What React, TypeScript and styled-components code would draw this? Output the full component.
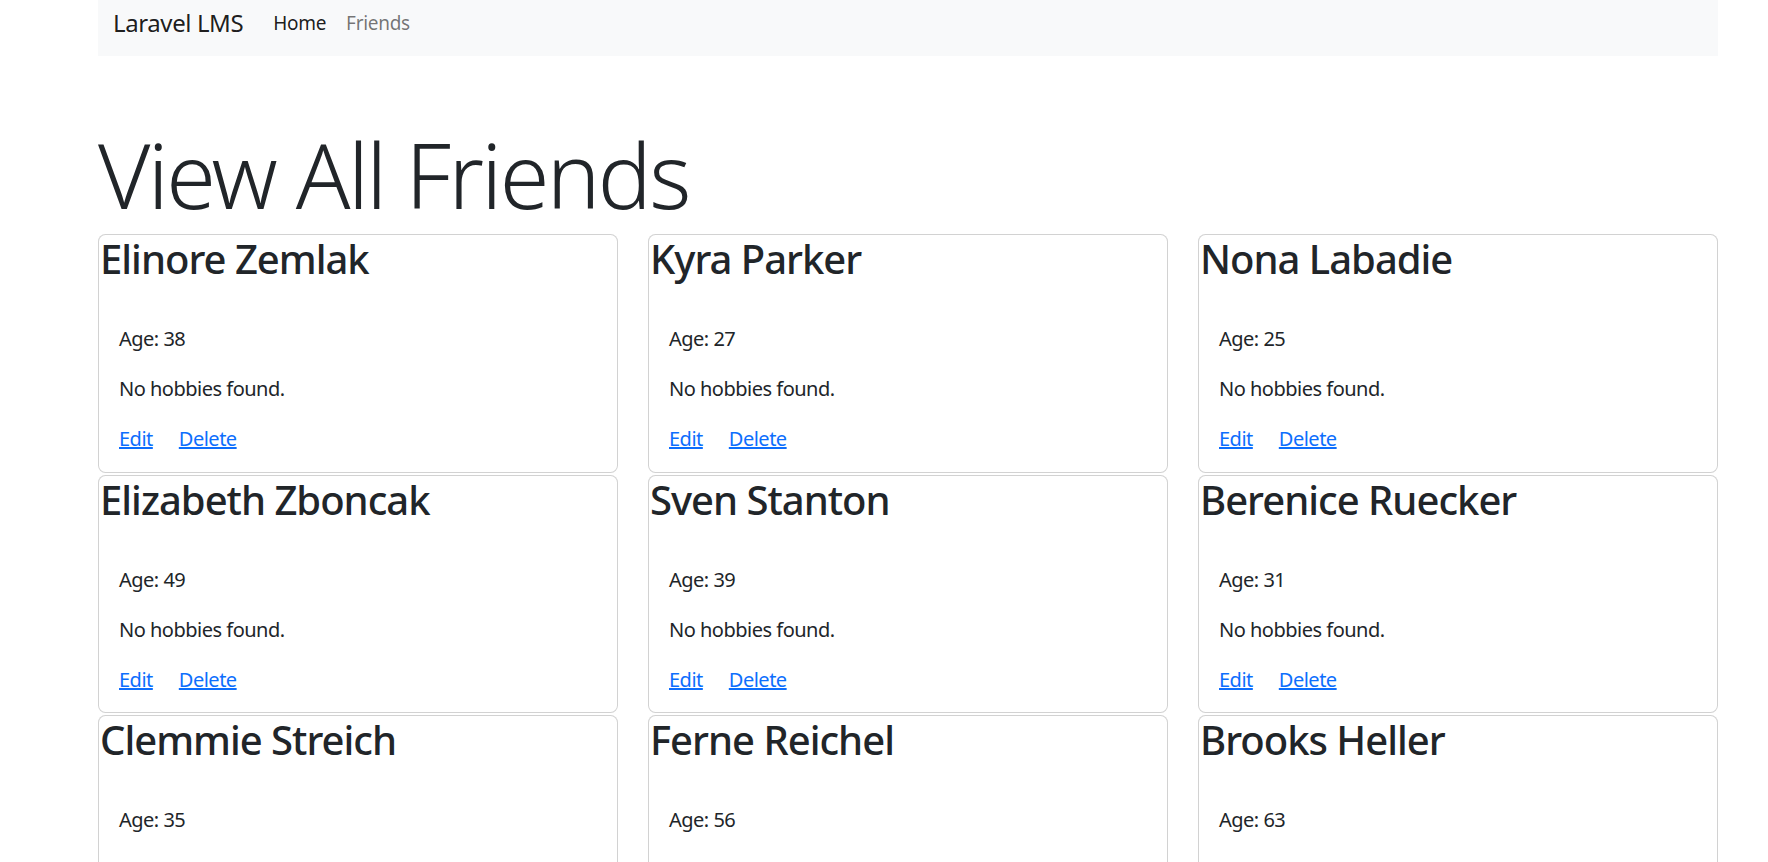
import React from 'react';
import styled, { createGlobalStyle } from 'styled-components';

const GlobalStyle = createGlobalStyle`
  html, body {
    margin: 0;
    padding: 0;
    background: #ffffff;
  }
  body {
    font-family: 'Noto Sans', 'Open Sans', sans-serif;
    color: #212529;
    font-size: 20px;
    line-height: 1.5;
  }
`;

interface Friend {
  name: string;
  age: number;
}

const friends: Friend[] = [
  { name: 'Elinore Zemlak', age: 38 },
  { name: 'Kyra Parker', age: 27 },
  { name: 'Nona Labadie', age: 25 },
  { name: 'Elizabeth Zboncak', age: 49 },
  { name: 'Sven Stanton', age: 39 },
  { name: 'Berenice Ruecker', age: 31 },
  { name: 'Clemmie Streich', age: 35 },
  { name: 'Ferne Reichel', age: 56 },
  { name: 'Brooks Heller', age: 63 },
];

export default function App() {
  return (
    <>
      <GlobalStyle />
      <Page>
        <Navbar>
          <Brand href='#'>Laravel LMS</Brand>
          <NavLinks>
            <NavLink href='#' active>
              Home
            </NavLink>
            <NavLink href='#'>Friends</NavLink>
          </NavLinks>
        </Navbar>
        <Title>View All Friends</Title>
        <CardGrid>
          {friends.map((f) => (
            <Card key={f.name}>
              <CardName>{f.name}</CardName>
              <CardBody>
                <Text>Age: {f.age}</Text>
                <Text>No hobbies found.</Text>
                <Actions>
                  <ActionLink href='#'>Edit</ActionLink>
                  <ActionLink href='#'>Delete</ActionLink>
                </Actions>
              </CardBody>
            </Card>
          ))}
        </CardGrid>
      </Page>
    </>
  );
}

const Page = styled.div`
  width: 1620px;
  margin-left: 98px;
`;

const Navbar = styled.nav`
  display: flex;
  align-items: center;
  height: 56px;
  padding: 0 15px;
  background-color: #f8f9fa;
  box-sizing: border-box;
`;

const Brand = styled.a`
  font-size: 24px;
  letter-spacing: -0.4px;
  color: rgba(0, 0, 0, 0.9);
  text-decoration: none;
  margin-right: 20px;
  line-height: 1.5;
  margin-top: -10px;
`;

const NavLinks = styled.div`
  display: flex;
  margin-top: -10px;
`;

const NavLink = styled.a<{ active?: boolean }>`
  font-size: 19px;
  letter-spacing: -0.3px;
  padding: 0 10px;
  text-decoration: none;
  color: ${(p) => (p.active ? 'rgba(0, 0, 0, 0.9)' : 'rgba(0, 0, 0, 0.55)')};
`;

const Title = styled.h1`
  margin: 58px 0 0;
  font-size: 90px;
  font-weight: 300;
  letter-spacing: -2.6px;
  line-height: 120px;
`;

const CardGrid = styled.div`
  display: grid;
  grid-template-columns: repeat(3, 1fr);
  column-gap: 30px;
  row-gap: 2px;
`;

const Card = styled.div`
  border: 1px solid rgba(0, 0, 0, 0.175);
  border-radius: 7.5px;
  background: #ffffff;
`;

const CardName = styled.h2`
  margin: 0 0 20px;
  padding-left: 1px;
  font-size: 40px;
  font-weight: 500;
  letter-spacing: -1px;
  line-height: 48px;
`;

const CardBody = styled.div`
  padding: 21px 20px 17.5px;
`;

const Text = styled.p`
  margin: 0 0 20px;
  line-height: 30px;
  letter-spacing: -0.5px;
`;

const Actions = styled.div`
  display: flex;
  gap: 26px;
  line-height: 30px;
  letter-spacing: -0.5px;
`;

const ActionLink = styled.a`
  color: #0d6efd;
  text-decoration: underline;
`;
